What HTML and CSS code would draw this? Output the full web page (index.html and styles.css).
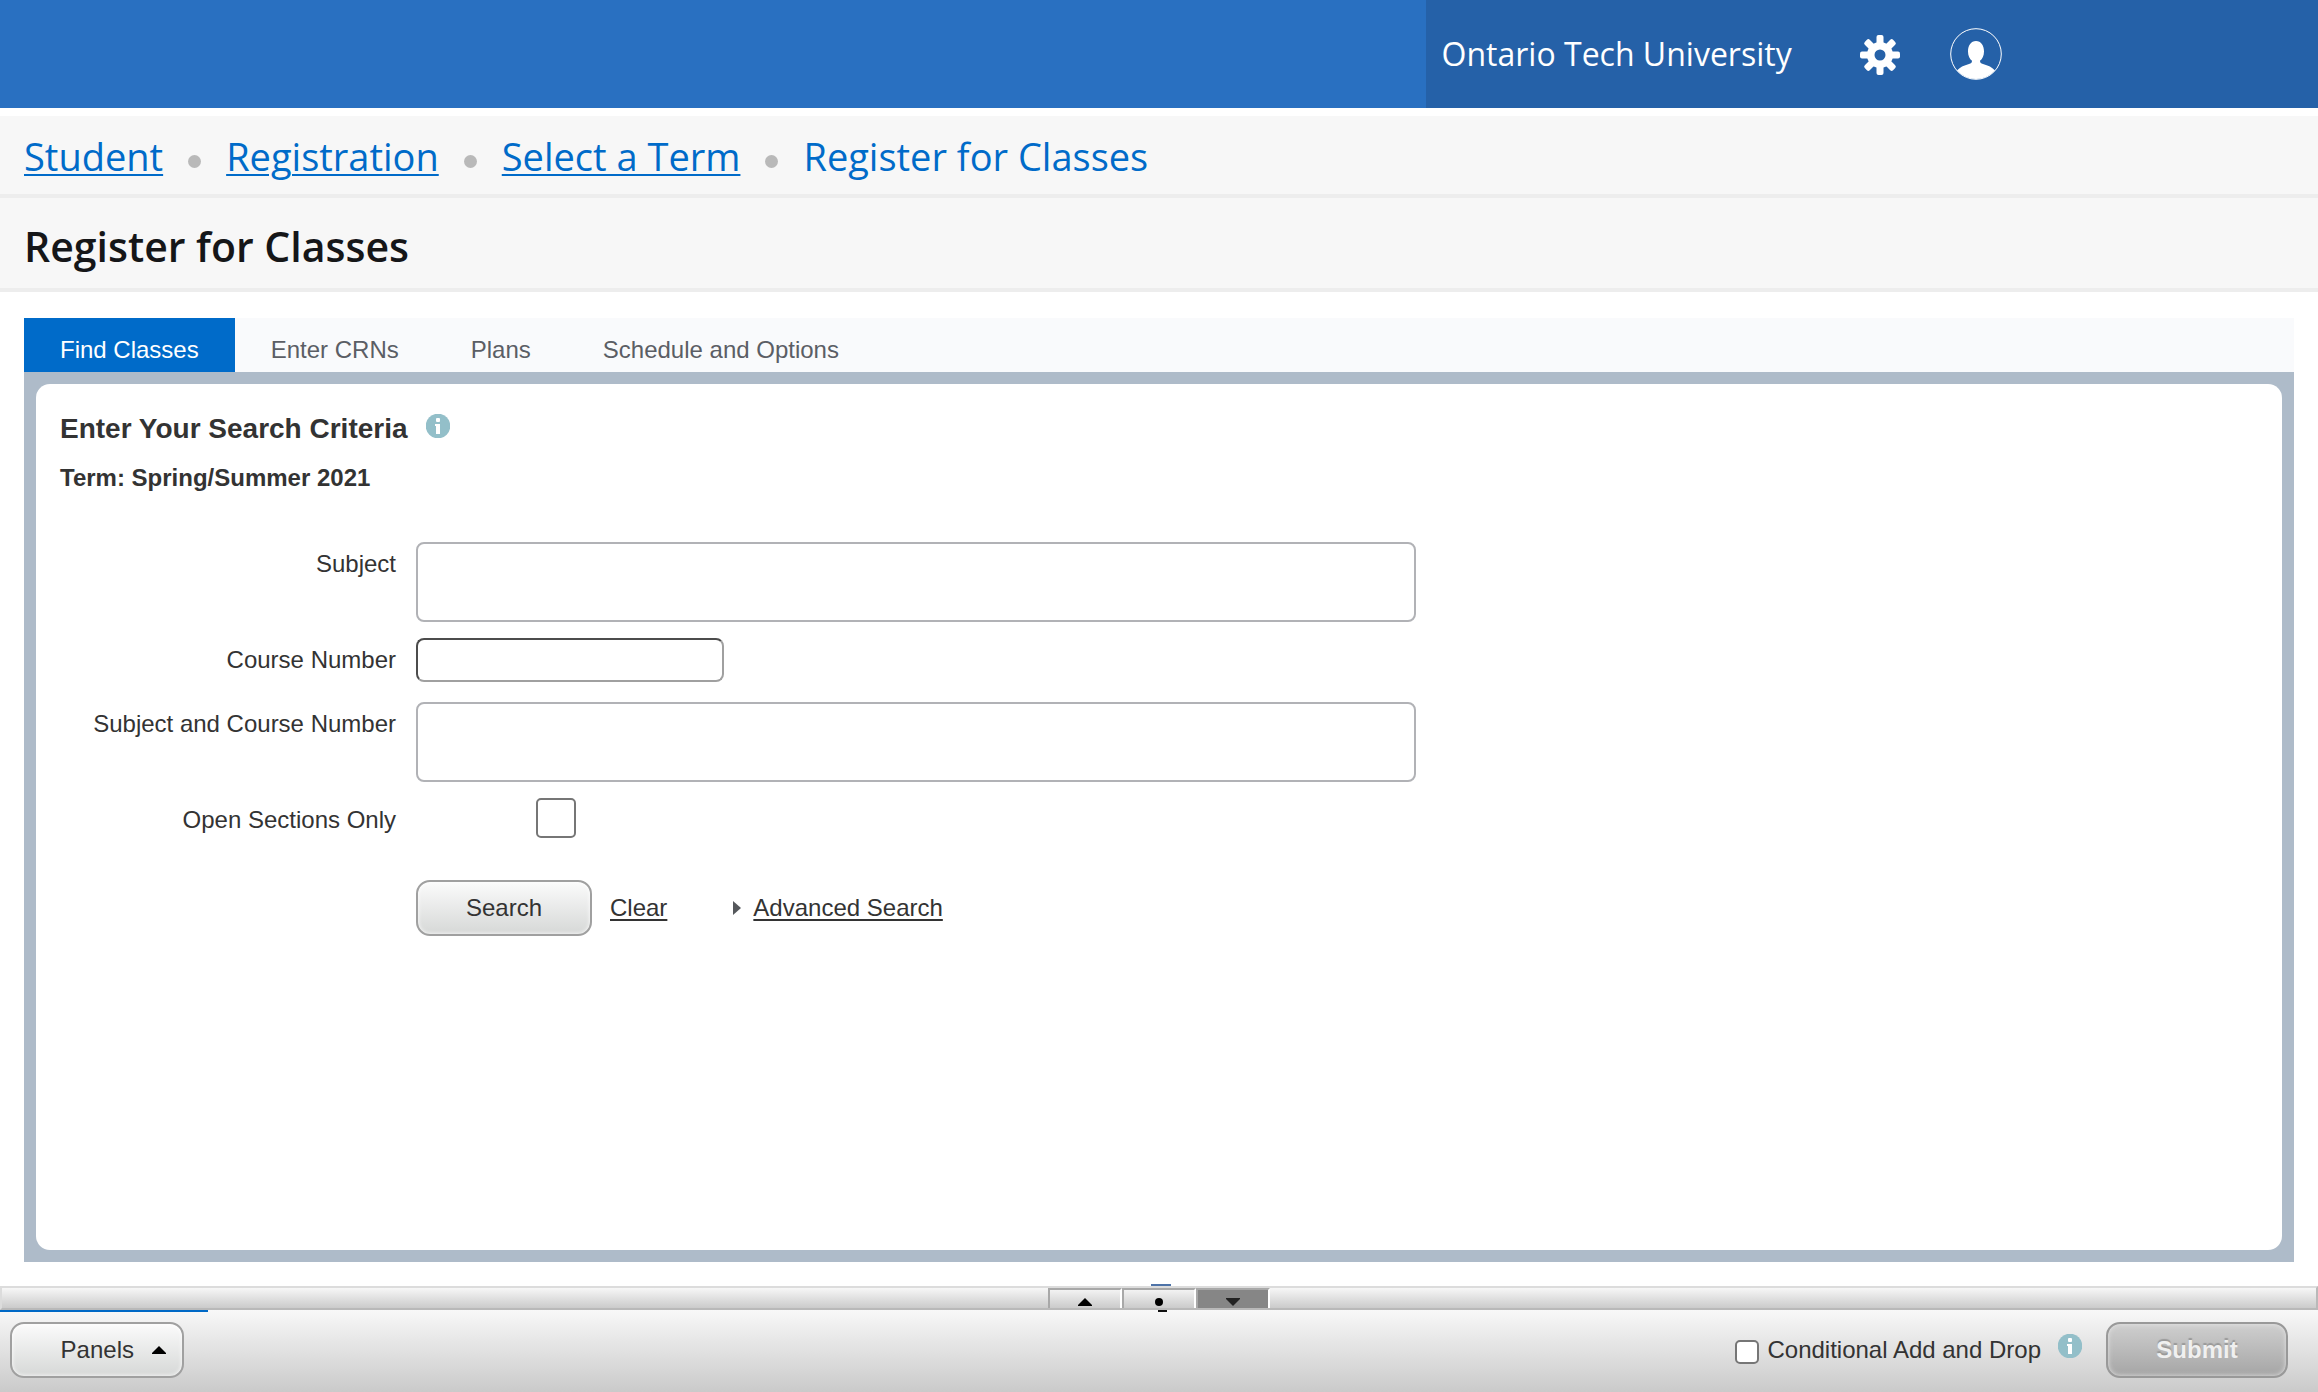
FILE: index.html
```
<!DOCTYPE html>
<html lang="en">
<head>
<meta charset="utf-8">
<title>Register for Classes</title>
<link rel="stylesheet" href="styles.css">
</head>
<body>
<header class="topbar">
  <div class="topbar-tools">
    <span class="institution">Ontario Tech University</span>
    <button class="icon-button gear-button" type="button" aria-label="Tools">
      <svg width="40" height="40" viewBox="0 0 40 40" fill="#fff" aria-hidden="true">
        <path fill-rule="evenodd" d="M20 7a13 13 0 1 0 0 26a13 13 0 1 0 0-26zM20 14.500a5.500 5.500 0 1 1 0 11a5.500 5.500 0 1 1 0-11z"/>
        <g id="teeth">
          <rect x="16.500" y="0" width="7" height="10" rx="2"/>
          <rect x="16.500" y="30" width="7" height="10" rx="2"/>
          <rect x="0" y="16.500" width="10" height="7" rx="2"/>
          <rect x="30" y="16.500" width="10" height="7" rx="2"/>
        </g>
        <use href="#teeth" transform="rotate(45 20 20)"/>
      </svg>
    </button>
    <button class="icon-button" type="button" aria-label="Profile">
      <svg width="52" height="52" viewBox="0 0 52 52" aria-hidden="true">
        <circle cx="26" cy="26" r="25.300" fill="none" stroke="#fff"/>
        <path fill="#fff" d="M26 13c5 0 8 4.500 8 10.500c0 4-1.600 7.500-4 9.300c0 2 1 2.700 3 3.200c5 1.300 9.500 3.500 12 6.500a25.500 25.500 0 0 1-38 0c2.500-3 7-5.200 12-6.500c2-.5 3-1.200 3-3.200c-2.400-1.800-4-5.300-4-9.300c0-6 3-10.500 8-10.500z"/>
      </svg>
    </button>
  </div>
</header>

<nav class="breadcrumb" aria-label="Breadcrumb">
  <a href="#">Student</a>
  <span class="dot"></span>
  <a href="#">Registration</a>
  <span class="dot"></span>
  <a href="#">Select a Term</a>
  <span class="dot"></span>
  <span>Register for Classes</span>
</nav>
<h1 class="page-title">Register for Classes</h1>

<main class="content">
  <div class="tabs" role="tablist">
    <button class="tab active" type="button" role="tab" aria-selected="true">Find Classes</button>
    <button class="tab" type="button" role="tab">Enter CRNs</button>
    <button class="tab" type="button" role="tab">Plans</button>
    <button class="tab" type="button" role="tab">Schedule and Options</button>
  </div>
  <section class="frame">
    <div class="sheet">
      <div class="heading">
        <h2>Enter Your Search Criteria</h2>
        <svg class="info" viewBox="0 0 24 24" aria-hidden="true"><circle cx="12" cy="12" r="12.300"/><rect x="10" y="4" width="4" height="4" rx="1"/><path d="M9 10h5v10h-4v-8h-1z"/></svg>
      </div>
      <p class="term">Term: Spring/Summer 2021</p>
      <form class="search-form">
        <div class="field">
          <label for="subject">Subject</label>
          <input class="box wide" id="subject" type="text">
        </div>
        <div class="field">
          <label for="course">Course Number</label>
          <input class="box short" id="course" type="text">
        </div>
        <div class="field spaced">
          <label for="subject-course">Subject and Course Number</label>
          <input class="box wide" id="subject-course" type="text">
        </div>
        <div class="field">
          <label for="open">Open Sections Only</label>
          <input class="check large" id="open" type="checkbox">
        </div>
        <div class="actions">
          <button class="button search" type="button">Search</button>
          <a class="clear" href="#">Clear</a>
          <svg class="caret" width="8" height="14" viewBox="0 0 8 14" fill="#55585c" aria-hidden="true"><path d="M0 0l8 7l-8 7z"/></svg>
          <a href="#">Advanced Search</a>
        </div>
      </form>
    </div>
  </section>
</main>

<div class="splitter">
  <button class="split" type="button" aria-label="Expand"><svg width="14" height="8" viewBox="0 0 14 8" aria-hidden="true"><path d="M7 0l7 7v1h-14v-1z"/></svg></button>
  <button class="split middle" type="button" aria-label="Restore"><svg width="8" height="8" viewBox="0 0 8 8" aria-hidden="true"><circle cx="4" cy="4" r="4"/></svg></button>
  <button class="split pressed" type="button" aria-label="Collapse"><svg width="14" height="8" viewBox="0 0 14 8" fill="#222" aria-hidden="true"><path d="M0 0h14v1l-7 7l-7-7z"/></svg></button>
</div>

<footer class="footer">
  <button class="button panels" type="button">Panels <svg width="14" height="8" viewBox="0 0 14 8" aria-hidden="true"><path d="M7 0l7 7v1h-14v-1z"/></svg></button>
  <div class="footer-right">
    <input class="check" id="conditional" type="checkbox">
    <label for="conditional">Conditional Add and Drop</label>
    <svg class="info" viewBox="0 0 24 24" aria-hidden="true"><circle cx="12" cy="12" r="12.300"/><rect x="10" y="4" width="4" height="4" rx="1"/><path d="M9 10h5v10h-4v-8h-1z"/></svg>
    <button class="button submit" type="button" disabled>Submit</button>
  </div>
</footer>
</body>
</html>
```
FILE: styles.css
```
* { box-sizing: border-box; }

body {
  margin: 0;
  min-height: 100vh;
  display: flex;
  flex-direction: column;
  background: #fff;
  color: #333;
  font: 24px/28px "Liberation Sans", Arial, sans-serif;
}

button, input { font: inherit; color: inherit; margin: 0; }
h1, h2, p { margin: 0; }
a { color: inherit; text-underline-offset: 3px; text-decoration-thickness: 2px; }
svg { display: block; flex: none; }

.topbar {
  height: 108px;
  display: flex;
  justify-content: flex-end;
  background: #2970c1;
}
.topbar-tools {
  width: 38.5%;
  padding-left: 16px;
  display: flex;
  align-items: center;
  background: #2561a8;
  color: #fff;
  font: 32px/44px "Open Sans", sans-serif;
}
.icon-button { padding: 0; border: 0; background: none; }
.gear-button { margin: 0 50px 0 68px; padding-top: 2px; }

.breadcrumb {
  margin-top: 8px;
  height: 82px;
  padding: 2px 24px 0;
  display: flex;
  align-items: center;
  gap: 25px;
  background: #f7f7f7;
  border-bottom: 4px solid #ededed;
  color: #006bc9;
  font: 38px/52px "Open Sans", sans-serif;
}
.dot {
  width: 13px;
  height: 13px;
  margin-top: 10px;
  border-radius: 50%;
  background: #b9b9b9;
}

.page-title {
  height: 94px;
  padding: 18px 24px;
  background: #f7f7f7;
  border-bottom: 4px solid #ededed;
  color: #151618;
  font: 600 41px/60px "Open Sans", sans-serif;
}

.content {
  flex: 1;
  display: flex;
  flex-direction: column;
  padding: 26px 24px 24px;
}
.tabs { display: flex; background: #f9fafc; }
.tab {
  padding: 18px 36px 8px;
  border: 0;
  background: none;
  color: #5b5e65;
}
.tab.active { background: #006bc9; color: #fff; }

.frame {
  flex: 1;
  display: flex;
  padding: 12px;
  background: #aebbc9;
}
.sheet {
  flex: 1;
  padding: 28px 24px;
  border-radius: 14px;
  background: #fff;
}
.heading { display: flex; gap: 18px; margin-bottom: 18px; }
.heading h2 { font-size: 28px; line-height: 34px; }
.info { width: 24px; height: 24px; fill: #fff; }
.info circle { fill: #93bfc9; }
.heading .info { margin-top: 2px; }
.term { font-weight: bold; }

.search-form { margin-top: 50px; }
.field {
  display: grid;
  grid-template-columns: 336px 1fr;
  column-gap: 20px;
  align-items: start;
  margin-bottom: 16px;
}
.field.spaced { margin-top: 20px; }
.field label { padding-top: 8px; text-align: right; }

.box {
  padding: 0 12px;
  border: 2px solid #b1b2b6;
  border-radius: 8px;
  background: #fff;
}
.wide { width: 100%; max-width: 1000px; height: 80px; }
.short {
  width: 308px;
  height: 44px;
  border-color: #4c4c4c #a0a0a0 #a0a0a0 #4c4c4c;
}

.check {
  appearance: none;
  width: 24px;
  height: 24px;
  border: 2px solid #767676;
  border-radius: 5px;
  background: #fff;
}
.check.large { width: 40px; height: 40px; margin-left: 120px; }

.actions {
  display: flex;
  align-items: center;
  margin: 42px 0 0 356px;
}
.clear { margin: 0 66px 0 18px; }
.caret { margin-right: 12px; }

.button {
  height: 56px;
  border: 2px solid #a0a0a0;
  border-radius: 14px;
  background: linear-gradient(#fbfbfb, #d6d8d7);
  box-shadow: inset 0 0 4px #fff;
}
.search { width: 176px; }

.splitter {
  height: 24px;
  display: flex;
  justify-content: center;
  border: 2px solid;
  border-color: #dcdcdc #b9b9b9 #b9b9b9 #dcdcdc;
  background: linear-gradient(#f7f7f7, #cbcbcb);
}
.split {
  position: relative;
  width: 74px;
  display: flex;
  justify-content: center;
  align-items: flex-end;
  padding: 0 0 2px;
  border: 2px solid;
  border-color: #a8a8a8 #fff transparent #a8a8a8;
  border-bottom: 0;
  background: none;
}
.split.pressed { background: #868686; }
/* Drag handle that shows above and below the bar */
.middle::before, .middle::after {
  content: "";
  position: absolute;
  left: 27px;
  width: 20px;
  height: 2px;
  top: -6px;
  background: #4e73a8;
}
.middle::after { left: 34px; width: 9px; top: 20px; background: #111; }

.footer {
  height: 82px;
  display: flex;
  justify-content: space-between;
  align-items: center;
  padding: 0 30px 2px 10px;
  background: linear-gradient(#0069c6, #0069c6) no-repeat 0 0 / 208px 2px, linear-gradient(#f8f8f8, #cacaca);
}
.panels {
  width: 174px;
  display: flex;
  align-items: center;
  justify-content: flex-end;
  gap: 18px;
  padding: 0 16px;
}
.footer-right { display: flex; align-items: center; }
.footer-right label { margin: 0 17px 0 8px; }
.footer-right .check { margin-top: 4px; }
.footer-right .info { margin: 0 24px 8px 0; }
.submit {
  width: 182px;
  border-color: #999;
  background: linear-gradient(#cfcfcf, #a5a5a5);
  box-shadow: inset 0 0 5px #e4e4e4;
  color: #f0f0f0;
  font-weight: bold;
  text-shadow: 0 -2px 1px #999;
}
```
